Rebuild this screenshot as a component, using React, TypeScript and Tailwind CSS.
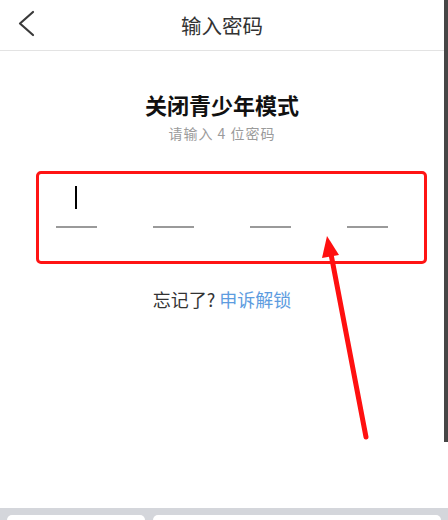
const font = { fontFamily: '"Noto Sans CJK SC", "Noto Sans", sans-serif' };

function CodeSlot({ active }: { active?: boolean }) {
  return (
    <div className="flex w-[41px] flex-col items-center">
      <div className="flex h-[23px] w-full justify-center">
        {active && <div className="h-[23px] w-[2px] bg-black" />}
      </div>
      <div className="mt-[17px] h-[2px] w-[41px] bg-[#9a9a9a]" />
    </div>
  );
}

export default function App() {
  return (
    <div className="relative flex h-[520px] w-[448px] flex-col overflow-hidden bg-white" style={font}>
      <div className="flex h-[508px] w-full">
        {/* Page */}
        <div className="flex w-[444px] flex-col">
          {/* Header */}
          <div className="relative flex h-[51px] items-center justify-center border-b border-[#e3e3e3]">
            <svg className="absolute left-[14px] top-[8px]" width="26" height="32" viewBox="0 0 26 32">
              <polyline points="19,4 6,15.5 19,27" fill="none" stroke="#3a3a3a" strokeWidth="2.2" strokeLinecap="round" strokeLinejoin="round" />
            </svg>
            <span className="text-[20.5px] leading-none text-[#333]">输入密码</span>
          </div>

          <div className="flex flex-col items-center">
            <h1 className="mt-[42px] text-[22px] font-bold leading-[22px] text-[#111]">关闭青少年模式</h1>
            <p className="mt-[11px] text-[14px] leading-[14px] tracking-[1px] text-[#9b9b9b]">请输入 4 位密码</p>

            {/* Code inputs */}
            <div className="mt-[46px] flex gap-[56px] pr-[1px]">
              <CodeSlot active />
              <CodeSlot />
              <CodeSlot />
              <CodeSlot />
            </div>

            <p className="mt-[62px] text-[18px] leading-[18px] text-[#333]">
              忘记了? <span className="text-[#5d9ce0]">申诉解锁</span>
            </p>
          </div>
        </div>
        {/* Scrollbar strip */}
        <div className="h-[442px] w-[4px] bg-[#464646]" />
      </div>

      {/* Keyboard top */}
      <div className="flex h-[12px] w-full gap-[8px] bg-[#d4d6db] px-[7px] pt-[7px]">
        <div className="h-full w-[138px] rounded-t-[5px] bg-white" />
        <div className="h-full flex-1 rounded-t-[5px] bg-white" />
      </div>

      {/* Annotation box */}
      <div className="absolute left-[36px] top-[171px] h-[93px] w-[391px] rounded-[5px] border-[3px] border-[#ff1414]" />

      {/* Annotation arrow */}
      <svg className="absolute left-0 top-0" width="448" height="520" viewBox="0 0 448 520">
        <line x1="366" y1="437" x2="331" y2="254" stroke="#ff1010" strokeWidth="5" strokeLinecap="round" />
        <polygon points="327,236 339,255 322,258" fill="#ff1010" />
      </svg>
    </div>
  );
}
